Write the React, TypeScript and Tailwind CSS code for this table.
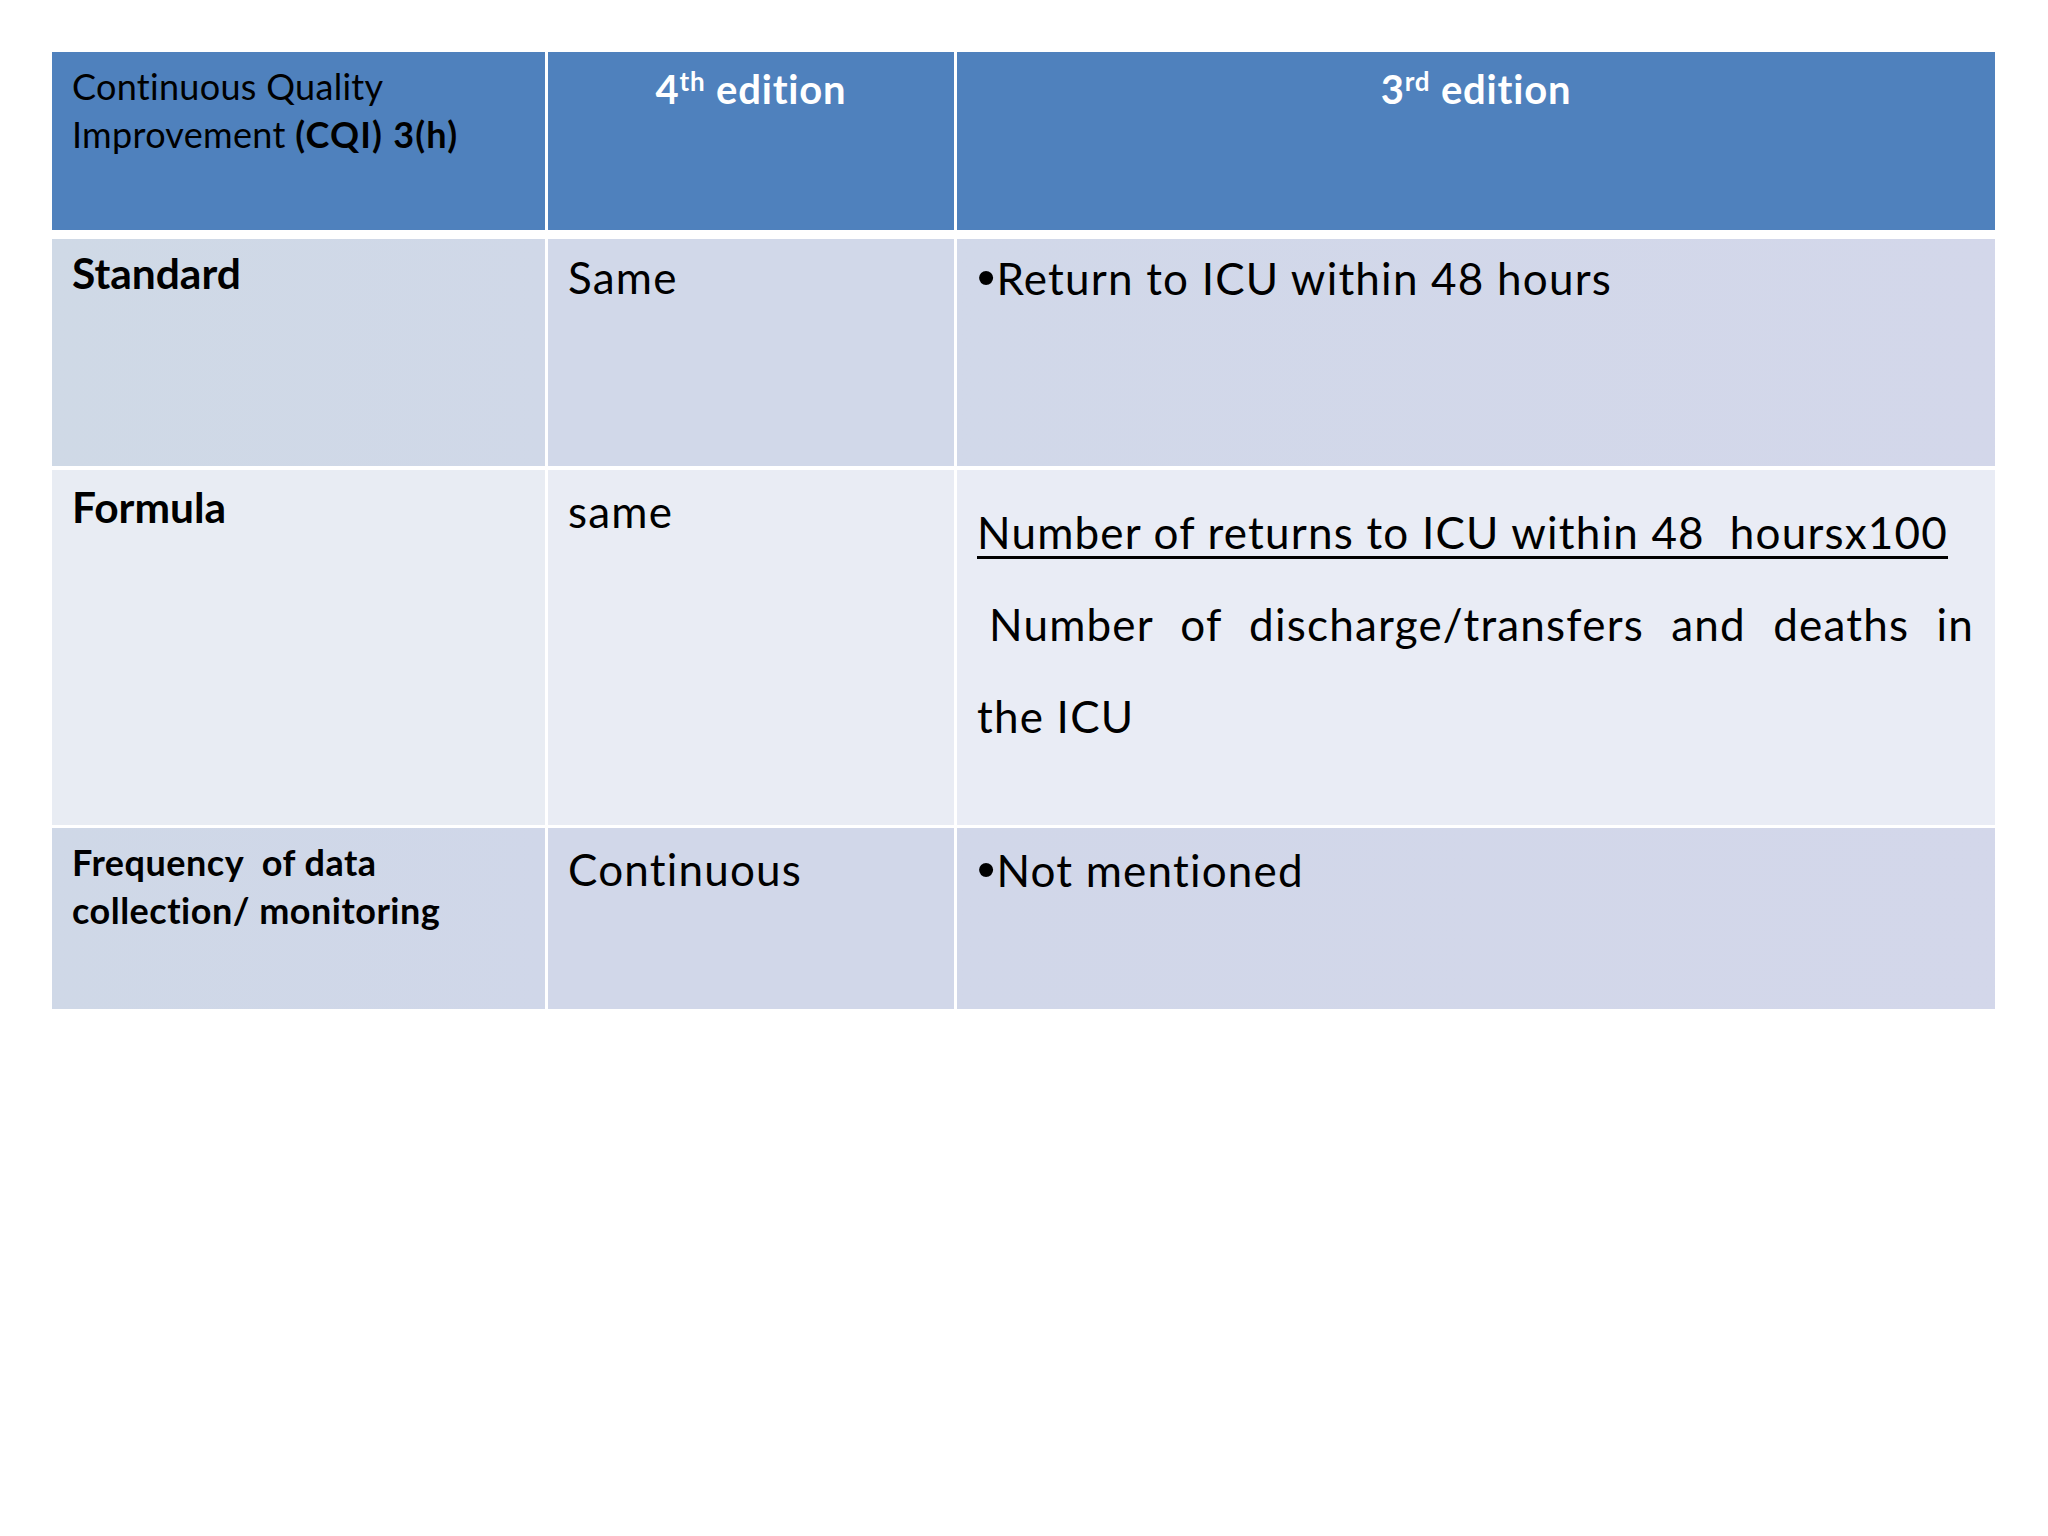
function Bullet() {
  return <span className="[font-family:'Liberation_Sans',Arial,sans-serif] text-[52px] tracking-[1.2px]">•</span>;
}

export default function App() {
  return (
    <div className="w-[2048px] h-[1536px] bg-white overflow-hidden [font-family:Lato,'Open_Sans',sans-serif] text-black">
      <div className="pt-[52px] pl-[52px]">
        <div className="w-[1943px] flex flex-col">
          {/* Header */}
          <div className="grid grid-cols-[493px_406px_1038px] gap-x-[3px] h-[178px]">
            <div className="bg-[#4F81BD] pl-[20px] pt-[10px] text-[36px] leading-[48px] tracking-[0.3px]">
              <div>Continuous Quality</div>
              <div>
                Improvement <span className="font-bold tracking-[1.2px]">(CQI) 3(h)</span>
              </div>
            </div>
            <div className="bg-[#4F81BD] pt-[13px] text-center text-white font-bold text-[40px] leading-[48px] tracking-[0.8px]">
              4<span className="relative -top-[13px] text-[26px]">th</span> edition
            </div>
            <div className="bg-[#4F81BD] pt-[13px] text-center text-white font-bold text-[40px] leading-[48px] tracking-[0.8px]">
              3<span className="relative -top-[13px] text-[26px]">rd</span> edition
            </div>
          </div>

          {/* Standard */}
          <div className="mt-[9px] grid grid-cols-[493px_406px_1038px] gap-x-[3px] h-[227px]">
            <div className="bg-linear-to-r from-[#CFD9E6] to-[#D0D8E8] pl-[20px] pt-[10px] font-bold text-[42.5px] leading-[48px]">
              Standard
            </div>
            <div className="bg-[#D1D8E9] pl-[20px] pt-[14px] text-[44px] leading-[48px] tracking-[1.2px]">Same</div>
            <div className="bg-linear-to-r from-[#D1D8E9] to-[#D3D7EA] pl-[20px] pt-[14px] text-[44px] leading-[48px] tracking-[1.2px]">
              <Bullet />
              Return to ICU within 48 hours
            </div>
          </div>

          {/* Formula */}
          <div className="mt-[4px] grid grid-cols-[493px_406px_1038px] gap-x-[3px] h-[355px]">
            <div className="bg-[#E8ECF3] pl-[20px] pt-[13px] font-bold text-[42.5px] leading-[48px]">Formula</div>
            <div className="bg-[#E9ECF4] pl-[20px] pt-[17px] text-[44px] leading-[48px] tracking-[1.2px]">same</div>
            <div className="bg-[#E9ECF5] pl-[20px] pr-[21px] pt-[16px] text-[44px] leading-[92px] tracking-[1.2px]">
              <div className="whitespace-pre underline decoration-[2.5px] underline-offset-[7px]">
                {"Number of returns to ICU within 48  hoursx100"}
              </div>
              <div className="pl-[12px] text-justify [text-align-last:justify]">
                Number of discharge/transfers and deaths in
              </div>
              <div>the ICU</div>
            </div>
          </div>

          {/* Frequency */}
          <div className="mt-[3px] grid grid-cols-[493px_406px_1038px] gap-x-[3px] h-[181px]">
            <div className="bg-linear-to-r from-[#CFD8E7] to-[#D0D7E9] pl-[20px] pt-[10px] font-bold text-[36px] leading-[48px] tracking-[0.5px]">
              <div className="whitespace-pre">{"Frequency  of data"}</div>
              <div>collection/ monitoring</div>
            </div>
            <div className="bg-[#D1D7E9] pl-[20px] pt-[17px] text-[44px] leading-[48px] tracking-[1.2px]">Continuous</div>
            <div className="bg-linear-to-r from-[#D1D7E9] to-[#D3D7EA] pl-[20px] pt-[17px] text-[44px] leading-[48px] tracking-[1.2px]">
              <Bullet />
              Not mentioned
            </div>
          </div>
        </div>
      </div>
    </div>
  );
}
